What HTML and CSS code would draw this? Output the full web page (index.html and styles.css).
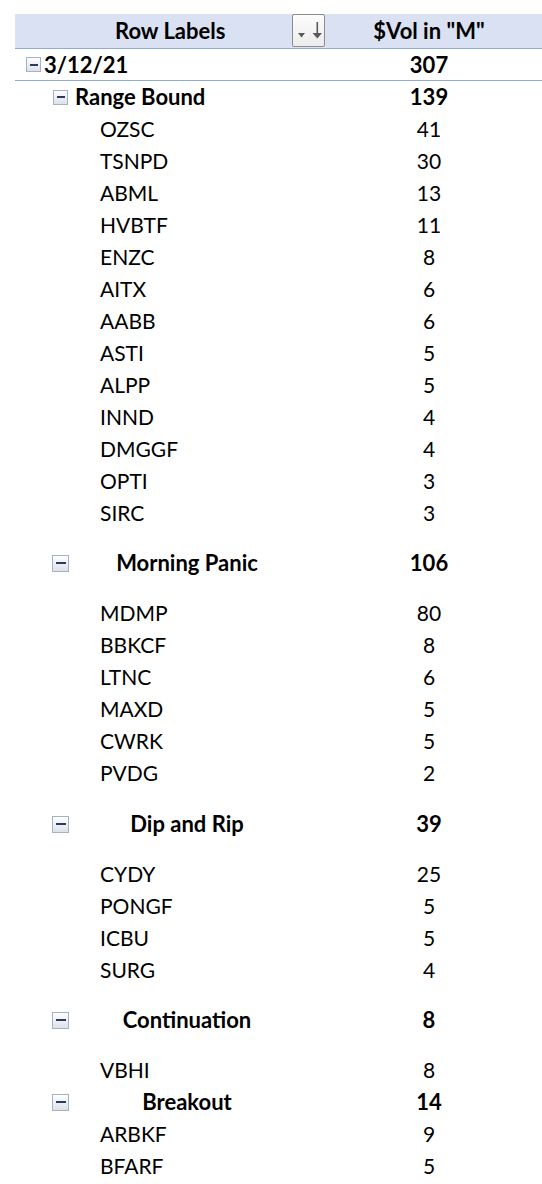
FILE: index.html
```html
<!DOCTYPE html>
<html>
<head>
<meta charset="utf-8">
<link rel="stylesheet" href="styles.css">
</head>
<body>
<div class="pivot">
  <div class="row header">
    <div class="label">
      <span class="head-text">Row Labels</span>
      <span class="filter-btn">
        <svg width="31" height="31" viewBox="0 0 31 31">
          <polygon points="5,18 12,18 8.5,22.5" fill="#5a5a5a"/>
          <rect x="23.5" y="7" width="1.6" height="13" fill="#5a5a5a"/>
          <polygon points="19.5,18 29,18 24.3,23.5" fill="#5a5a5a"/>
        </svg>
      </span>
    </div>
    <div class="value">$Vol in "M"</div>
  </div>

  <div class="row date bold">
    <div class="label"><span class="toggle"></span><span>3/12/21</span></div>
    <div class="value">307</div>
  </div>

  <div class="row group-first bold">
    <div class="label"><span class="toggle"></span><span>Range Bound</span></div>
    <div class="value">139</div>
  </div>
  <div class="row item"><div class="label">OZSC</div><div class="value">41</div></div>
  <div class="row item"><div class="label">TSNPD</div><div class="value">30</div></div>
  <div class="row item"><div class="label">ABML</div><div class="value">13</div></div>
  <div class="row item"><div class="label">HVBTF</div><div class="value">11</div></div>
  <div class="row item"><div class="label">ENZC</div><div class="value">8</div></div>
  <div class="row item"><div class="label">AITX</div><div class="value">6</div></div>
  <div class="row item"><div class="label">AABB</div><div class="value">6</div></div>
  <div class="row item"><div class="label">ASTI</div><div class="value">5</div></div>
  <div class="row item"><div class="label">ALPP</div><div class="value">5</div></div>
  <div class="row item"><div class="label">INND</div><div class="value">4</div></div>
  <div class="row item"><div class="label">DMGGF</div><div class="value">4</div></div>
  <div class="row item"><div class="label">OPTI</div><div class="value">3</div></div>
  <div class="row item"><div class="label">SIRC</div><div class="value">3</div></div>

  <div class="row group tall bold">
    <div class="label"><span class="toggle big"></span><span class="group-name">Morning Panic</span></div>
    <div class="value">106</div>
  </div>
  <div class="row item tall"><div class="label">MDMP</div><div class="value">80</div></div>
  <div class="row item"><div class="label">BBKCF</div><div class="value">8</div></div>
  <div class="row item"><div class="label">LTNC</div><div class="value">6</div></div>
  <div class="row item"><div class="label">MAXD</div><div class="value">5</div></div>
  <div class="row item"><div class="label">CWRK</div><div class="value">5</div></div>
  <div class="row item"><div class="label">PVDG</div><div class="value">2</div></div>

  <div class="row group taller bold">
    <div class="label"><span class="toggle big"></span><span class="group-name">Dip and Rip</span></div>
    <div class="value">39</div>
  </div>
  <div class="row item tall"><div class="label">CYDY</div><div class="value">25</div></div>
  <div class="row item"><div class="label">PONGF</div><div class="value">5</div></div>
  <div class="row item"><div class="label">ICBU</div><div class="value">5</div></div>
  <div class="row item"><div class="label">SURG</div><div class="value">4</div></div>

  <div class="row group tall bold">
    <div class="label"><span class="toggle big"></span><span class="group-name">Continuation</span></div>
    <div class="value">8</div>
  </div>
  <div class="row item tall"><div class="label">VBHI</div><div class="value">8</div></div>

  <div class="row group bold">
    <div class="label"><span class="toggle big"></span><span class="group-name">Breakout</span></div>
    <div class="value">14</div>
  </div>
  <div class="row item"><div class="label">ARBKF</div><div class="value">9</div></div>
  <div class="row item"><div class="label">BFARF</div><div class="value">5</div></div>
</div>
</body>
</html>
```

FILE: styles.css
```css
html, body {
  margin: 0;
  padding: 0;
  background: #ffffff;
}

body {
  font-family: Lato, "Open Sans", sans-serif;
  font-size: 21px;
  color: #000000;
}

.pivot {
  padding-top: 14px;
  margin-left: 15px;
  width: 527px;
}

.row {
  display: flex;
  align-items: flex-end;
  height: 32px;
  line-height: 32px;
}

.row.tall {
  height: 50px;
}

.row.taller {
  height: 51px;
}

.bold {
  font-weight: 700;
  font-size: 22px;
}

.label {
  width: 301px;
  box-sizing: border-box;
  flex: none;
  display: flex;
  align-items: center;
  height: 32px;
  white-space: nowrap;
}

.value {
  flex: 1;
  text-align: center;
  height: 32px;
}

/* header */
.header {
  height: 34px;
  line-height: 34px;
  background: #d9e1f2;
  border-bottom: 1px solid #8ea9db;
  font-weight: 700;
  font-size: 22px;
  align-items: stretch;
}

.header .label,
.header .value {
  height: 34px;
}

.head-text {
  padding-left: 100px;
}

.filter-btn {
  margin-left: auto;
  margin-right: -9px;
  width: 33px;
  height: 33px;
  box-sizing: border-box;
  border: 1px solid #8c8c8c;
  border-radius: 2px;
  background: linear-gradient(#fcfcfc, #ececec);
  display: flex;
  align-self: flex-start;
}

.filter-btn svg {
  display: block;
}

/* date row */
.date {
  height: 31px;
  border-bottom: 1px solid #8ea9db;
}

.date .label {
  padding-left: 11px;
  height: 31px;
  gap: 3px;
}

.date .value {
  height: 31px;
  line-height: 31px;
}

/* first group */
.group-first .label {
  padding-left: 38px;
  gap: 7px;
}

/* items */
.item .label {
  padding-left: 85px;
}

/* centered groups */
.group .label {
  padding-left: 37px;
}

.group-name {
  flex: 1;
  text-align: center;
  margin-right: 11px;
}

/* toggle (collapse) icon */
.toggle {
  flex: none;
  width: 15px;
  height: 15px;
  box-sizing: border-box;
  border: 1px solid #a3b1c9;
  background: linear-gradient(#ffffff, #dde1e8);
  display: flex;
  align-items: center;
  justify-content: center;
}

.toggle::after {
  content: "";
  width: 8px;
  height: 2px;
  background: #2b3a5e;
}

.toggle.big {
  width: 17px;
  height: 17px;
}

.toggle.big::after {
  width: 10px;
}
```
